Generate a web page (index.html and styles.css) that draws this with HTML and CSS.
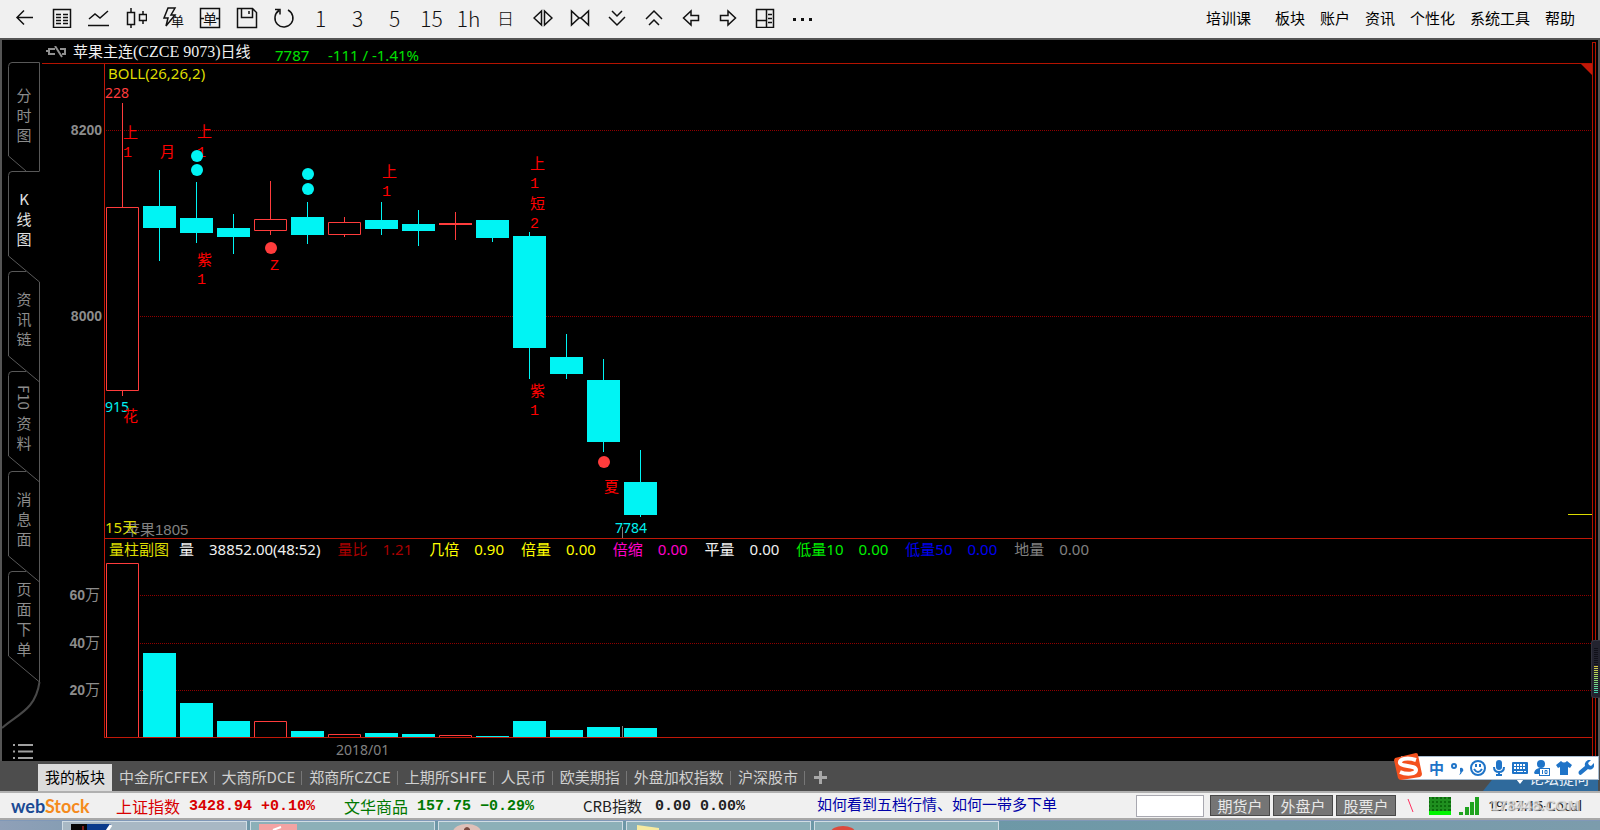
FILE: index.html
```html
<!DOCTYPE html>
<html lang="zh-CN">
<head>
<meta charset="utf-8">
<title>苹果主连 日线</title>
<link rel="stylesheet" href="styles.css">
</head>
<body>
<header class="toolbar">
  <div class="tools">
    <button class="tool" aria-label="返回"><svg width="20" height="20"><path d="M18 9.500H2M9 2.500L2 9.500l7 7"/></svg></button>
    <button class="tool" aria-label="报价"><svg width="20" height="20"><path d="M1.500 1.500h17v18h-17zM4 6.500h5M11 6.500h5M4 9.500h5M11 9.500h5M4 12.500h5M11 12.500h5M4 15.500h5M11 15.500h5"/></svg></button>
    <button class="tool" aria-label="分时"><svg width="22" height="20"><path d="M1 11l6-5 5 4 8-7M0 17.500h21"/></svg></button>
    <button class="tool" aria-label="K线"><svg width="22" height="20"><path d="M2.500 4.500h7v12h-7zM6 0v4M6 16v4M14.500 6.500h7v6h-7zM18 3v3M18 13v3"/></svg></button>
    <button class="tool" aria-label="闪电下单"><svg width="22" height="22"><path d="M6 1h7l-4 7h4L4 19l2-8H2z"/><text class="tool-word" x="9" y="19">单</text></svg></button>
    <button class="tool" aria-label="下单"><svg width="22" height="22"><path d="M1.500 1.500h19v19h-19zM1 11.500h4M17 11.500h4"/><text class="tool-word big" x="4" y="17">单</text></svg></button>
    <button class="tool" aria-label="保存"><svg width="22" height="22"><path d="M1.500 1.500h15l4 4v15h-19zM5.500 1.500v9h11v-9M13 4v3"/></svg></button>
    <button class="tool" aria-label="刷新"><svg width="22" height="22"><path d="M6 3.500A9 9 0 1 0 15 3M2 2.500h5v5"/></svg></button>
    <button class="tool period">1</button>
    <button class="tool period">3</button>
    <button class="tool period">5</button>
    <button class="tool period">15</button>
    <button class="tool period">1h</button>
    <button class="tool period day">日</button>
    <button class="tool" aria-label="拉宽"><svg width="20" height="18"><path d="M8.500 2v14L1 9zM11.500 2v14L19 9z"/></svg></button>
    <button class="tool" aria-label="收窄"><svg width="20" height="18"><path d="M1.500 2v14L9 9zM18.500 2v14L11 9zM8 9h4"/></svg></button>
    <button class="tool" aria-label="向下"><svg width="18" height="18"><path d="M4 2l5 5 5-5M1 8l8 8 8-8"/></svg></button>
    <button class="tool" aria-label="向上"><svg width="18" height="18"><path d="M1 10l8-8 8 8M4 16l5-5 5 5"/></svg></button>
    <button class="tool" aria-label="左移"><svg width="18" height="18"><path d="M9 2v4.500h7.500v5H9V16L1.500 9z"/></svg></button>
    <button class="tool" aria-label="右移"><svg width="18" height="18"><path d="M9 2v4.500H1.500v5H9V16l7.500-7z"/></svg></button>
    <button class="tool" aria-label="布局"><svg width="20" height="20"><path d="M1.500 1.500h17v18h-17zM11.500 1v18M1 12.500h10M13 6.500h4M13 10.500h4M13 14.500h4"/></svg></button>
    <button class="tool" aria-label="更多"><svg width="20" height="20"><path class="dots" d="M1 11.500h3M9 11.500h3M17 11.500h3"/></svg></button>
  </div>
  <nav class="menu">
    <a href="#" class="course">培训课</a><a href="#">板块</a><a href="#">账户</a><a href="#">资讯</a><a href="#">个性化</a><a href="#">系统工具</a><a href="#">帮助</a>
  </nav>
</header>

<main class="work">
  <aside class="side">
    <svg class="side-lines" width="40" height="721">
      <g fill="none" stroke="#585858" stroke-width="1">
        <path d="M37.500 131V22.500H10q-3.500 0-3.500 4V116L24 131"/>
        <path d="M37.500 131.500H10q-3.500 0-3.500 4V216L37.500 242V642"/>
        <path d="M24 231.500H10q-3.500 0-3.500 4V316L37.500 342"/>
        <path d="M24 331.500H10q-3.500 0-3.500 4V416L37.500 442"/>
        <path d="M24 431.500H10q-3.500 0-3.500 4V516L37.500 542"/>
        <path d="M24 531.500H10q-3.500 0-3.500 4V616L37.500 642"/>
        <path d="M37.500 642c-4 28-22 32-37.500 46" stroke-width="2" stroke="#484848"/>
      </g>
    </svg>
    <button class="tab first"><span>分</span><span>时</span><span>图</span></button>
    <button class="tab on"><span>K</span><span>线</span><span>图</span></button>
    <button class="tab"><span>资</span><span>讯</span><span>链</span></button>
    <button class="tab"><span class="turn">F10</span><span>资</span><span>料</span></button>
    <button class="tab"><span>消</span><span>息</span><span>面</span></button>
    <button class="tab"><span>页</span><span>面</span><span>下</span><span>单</span></button>
    <button class="list" aria-label="列表"><svg width="22" height="18"><path d="M1 3h2M6 3h15M1 9.500h2M6 9.500h15M1 16h2M6 16h15" stroke="#a0a0a0" stroke-width="2"/></svg></button>
  </aside>

  <section class="chart">
    <div class="title">
      <svg class="link" width="22" height="12" fill="none" stroke="#909090" stroke-width="2"><path d="M9 3H3v5h6M14 3h5v5h-3M0 5h3M9 0l7 11"/></svg>
      <span class="name">苹果主连<span class="code">(CZCE 9073)</span>日线</span>
      <span class="last">7787</span><span class="change">-111 / -1.41%</span>
    </div>
    <div class="price">
      <svg class="plot" width="100%" height="474">
        <path class="grid" d="M1 66.500H4000M1 252.500H4000"/>
        <text class="axis" x="-3" y="71">8200</text>
        <text class="axis" x="-3" y="257">8000</text>
        <g transform="translate(-105 -64)">
          <text class="ind" x="108" y="79">BOLL(26,26,2)</text>
          <text class="num hi" x="105" y="98">228</text>
          <g class="mark">
            <text x="123" y="138">上</text><text x="123" y="157">1</text>
            <text x="160" y="157">月</text>
            <text x="197" y="137">上</text><text x="197" y="157">1</text>
            <text x="197" y="265">紫</text><text x="197" y="284">1</text>
            <text x="270" y="270">Z</text>
            <text x="382" y="177">上</text><text x="382" y="196">1</text>
            <text x="530" y="169">上</text><text x="530" y="188">1</text>
            <text x="530" y="209">短</text><text x="530" y="228">2</text>
            <text x="530" y="396">紫</text><text x="530" y="415">1</text>
            <text x="604" y="492">夏</text>
          </g>
          <g class="up">
            <path d="M122.500 103V207M122.500 391V396M270.500 181V219M270.500 231V235M344.500 217V222M344.500 235V237M455.500 212V240"/>
            <path d="M106.500 207.500h32v183h-32zM254.500 219.500h32v11h-32zM328.500 222.500h32v12h-32z"/>
            <path d="M439 224h33" stroke-width="2"/>
          </g>
          <path class="wick" d="M159.500 170V261M196.500 182V243M233.500 214V254M307.500 202V244M381.500 202V235M418.500 210V246M492.500 238V242M529.500 232V379M566.500 334V379M603.500 359V452M640.500 450V517"/>
          <g class="down">
            <rect x="143" y="206" width="33" height="22"/><rect x="180" y="218" width="33" height="15"/>
            <rect x="217" y="228" width="33" height="9"/><rect x="291" y="217" width="33" height="18"/>
            <rect x="365" y="220" width="33" height="9"/><rect x="402" y="224" width="33" height="7"/>
            <rect x="476" y="220" width="33" height="18"/><rect x="513" y="236" width="33" height="112"/>
            <rect x="550" y="357" width="33" height="17"/><rect x="587" y="380" width="33" height="62"/>
            <rect x="624" y="482" width="33" height="33"/>
            <circle cx="197" cy="156" r="6"/><circle cx="197" cy="170" r="6"/>
            <circle cx="308" cy="174" r="6"/><circle cx="308" cy="189" r="6"/>
          </g>
          <g fill="#ff3c3c"><circle cx="271" cy="248" r="6"/><circle cx="604" cy="462" r="6"/></g>
          <text class="num lo" x="105" y="412">915</text>
          <g class="mark"><text x="123" y="421">花</text></g>
          <text class="contract" x="125" y="535">苹果1805</text>
          <text class="days" x="105" y="533">15天</text>
          <text class="num lo" x="615" y="533">7784</text>
          <path d="M622.500 527V538" stroke="#808080"/>
        </g>
      </svg>
      <i class="corner"></i><i class="latest"></i>
    </div>
    <div class="volume">
      <div class="legend">
        <p class="c-ind">量柱副图</p>
        <p class="c-vol"><span>量</span><span>38852.00(48:52)</span></p>
        <p class="c-dark"><span>量比</span><span>1.21</span></p>
        <p class="c-yellow"><span>几倍</span><span>0.90</span></p>
        <p class="c-yellow"><span>倍量</span><span>0.00</span></p>
        <p class="c-pink"><span>倍缩</span><span>0.00</span></p>
        <p class="c-white"><span>平量</span><span>0.00</span></p>
        <p class="c-green"><span>低量10</span><span>0.00</span></p>
        <p class="c-blue"><span>低量50</span><span>0.00</span></p>
        <p class="c-grey"><span>地量</span><span>0.00</span></p>
      </div>
      <svg class="plot" width="100%" height="176">
        <path class="grid" d="M1 34.500H4000M1 82.500H4000M1 129.500H4000"/>
        <text class="axis" x="-5" y="39">60<tspan class="wan">万</tspan></text>
        <text class="axis" x="-5" y="87">40<tspan class="wan">万</tspan></text>
        <text class="axis" x="-5" y="134">20<tspan class="wan">万</tspan></text>
        <g transform="translate(-105 -561)">
          <path class="up solid" d="M106.500 738V563.500h32V738M254.500 738V721.500h32V738M328.500 738V734.500h32V738M439.500 738V735.500h32V738"/>
          <g class="down">
            <rect x="143" y="653" width="33" height="84"/><rect x="180" y="703" width="33" height="34"/>
            <rect x="217" y="721" width="33" height="16"/><rect x="291" y="731" width="33" height="6"/>
            <rect x="365" y="733" width="33" height="4"/><rect x="402" y="734" width="33" height="3"/>
            <rect x="476" y="736" width="33" height="1"/><rect x="513" y="721" width="33" height="16"/>
            <rect x="550" y="730" width="33" height="7"/><rect x="587" y="727" width="33" height="10"/>
            <rect x="624" y="728" width="33" height="9"/>
          </g>
          <path d="M622.500 726V737" stroke="#808080"/>
        </g>
      </svg>
    </div>
    <div class="dates">2018/01</div>
  </section>
  <div class="rail"></div>
  <div class="meter"><i></i></div>
</main>

<nav class="boards">
  <a href="#" class="on">我的板块</a><a href="#">中金所CFFEX</a><a href="#">大商所DCE</a><a href="#">郑商所CZCE</a><a href="#">上期所SHFE</a><a href="#">人民币</a><a href="#">欧美期指</a><a href="#">外盘加权指数</a><a href="#">沪深股市</a>
  <button class="add" aria-label="添加板块"><svg width="13" height="13"><path d="M6.500 0v13M0 6.500h13" stroke="#a8a8a8" stroke-width="3"/></svg></button>
  <div class="forum"><svg width="18" height="12" fill="#fff"><path d="M2 0h14v3h-3l-4 5-4-5H2z"/></svg><span>论坛提问</span></div>
  <div class="ime">
    <svg class="ime-logo" width="30" height="30"><path d="M2 6L23 1q2 0 2 2l4 19q0 2-2 3L8 28q-2 0-3-2L1 8z" fill="#f4511e"/><path d="M23 8C14 5 6 7 7 11c1 4 16 2 16 7 0 4-9 5-16 2" fill="none" stroke="#fff" stroke-width="4"/></svg>
    <span class="zh">中</span>
    <svg width="14" height="16"><circle cx="4" cy="6" r="2" fill="none" stroke="#1f74c8" stroke-width="2"/><path d="M10 8a2 2 0 1 1 2 4q-1 3-3 3 2-2 1-4z" fill="#1f74c8"/></svg>
    <svg width="16" height="16" fill="none" stroke="#1f74c8" stroke-width="2"><circle cx="8" cy="8" r="7"/><path d="M4 9q4 6 8 0M6 4v3M10 4v3"/></svg>
    <svg width="14" height="16" fill="none" stroke="#1f74c8" stroke-width="2"><rect x="4" y="0" width="6" height="10" rx="3" fill="#1f74c8" stroke="none"/><path d="M2 7q0 5 5 5t5-5M7 12v3M4 15h6"/></svg>
    <svg width="16" height="12"><rect width="16" height="12" rx="1" fill="#1f74c8"/><path d="M2 3h12M2 6h12" stroke="#fff" stroke-width="2" stroke-dasharray="2 1"/><path d="M2 9.500h2M5 9.500h6M12 9.500h2" stroke="#fff" stroke-width="1"/></svg>
    <svg width="16" height="16"><circle cx="7" cy="4" r="4" fill="#1f74c8"/><path d="M0 13q1-5 7-5t6 3v3H1z" fill="#1f74c8"/><rect x="5.500" y="8.500" width="10" height="7" fill="#fff" stroke="#1f74c8"/><path d="M8.500 10v4M11 10.500h2v3h-2z" fill="none" stroke="#1f74c8"/></svg>
    <svg width="16" height="14"><path d="M5 0q3 3 6 0l5 4-2 3-2-1v8H4V6L2 7 0 4z" fill="#1f74c8"/></svg>
    <svg width="16" height="16"><path d="M10 0q2-1 3 0l-3 3 1 2 2 1 3-3q1 4-2 6-2 1-4 0l-6 5q-2 2-3 0-1-1 0-3l6-5q-1-4 3-6z" fill="#1f74c8"/></svg>
  </div>
</nav>

<footer class="status">
  <div class="brand"><span class="web">web</span><span class="stock">Stock</span></div>
  <div class="quote red"><span>上证指数</span><b>3428.94</b><b>+0.10%</b></div>
  <div class="quote green"><span>文华商品</span><b>157.75</b><b>−0.29%</b></div>
  <div class="quote black"><span>CRB指数</span><b>0.00</b><b>0.00%</b></div>
  <a href="#" class="help">如何看到五档行情、如何一带多下单</a>
  <div class="right">
    <input type="text" aria-label="代码">
    <button class="acct">期货户</button><button class="acct">外盘户</button><button class="acct">股票户</button>
    <svg class="slash" width="8" height="16"><path d="M1 1l5 13" stroke="#ff3060"/></svg>
    <svg class="load" width="22" height="18"><rect width="22" height="18" fill="#0c6a0c"/><path d="M2 0v14M6 0v14M10 0v14M14 0v14M18 0v14M0 3h22M0 7h22M0 11h22" stroke="#1f8f1f" stroke-width="2"/><rect y="14" width="22" height="4" fill="#00f400"/></svg>
    <svg class="signal" width="20" height="18" fill="#1fa31f"><path d="M0 15h4v3H0zM6 10h4v8H6zM11 5h4v13h-4zM16 0h4v18h-4z"/></svg>
    <div class="clock"><time>19:17:15-Local</time><span class="wm">178448.COM</span></div>
  </div>
</footer>

<div class="taskbar">
  <button class="task first" aria-label="行情窗口"><svg width="42" height="7"><rect width="16" height="7" fill="#060606"/><path d="M12 2v5" stroke="#e33"/><path d="M16 0h24l-4 7H16z" fill="#0b3b8c"/><path d="M40 1l-4 6" stroke="#fff" stroke-width="3"/></svg></button>
  <button class="task" aria-label="窗口二"><svg width="42" height="7"><rect width="38" height="7" fill="#f3a3a3"/><path d="M14 6l8-3" stroke="#fff" stroke-width="2"/></svg></button>
  <button class="task" aria-label="窗口三"><svg width="42" height="7"><ellipse cx="20" cy="8" rx="14" ry="8" fill="#dfc0b8"/><path d="M17 5q3-4 6 0v2h-6z" fill="#7a4a40"/></svg></button>
  <button class="task" aria-label="窗口四"><svg width="42" height="7"><path d="M2 1l22 3v3H2z" fill="#f6eaa0"/></svg></button>
  <button class="task" aria-label="窗口五"><svg width="42" height="7"><ellipse cx="20" cy="8" rx="12" ry="6" fill="#dc4a3c"/></svg></button>
</div>
</body>
</html>
```

FILE: styles.css
```css
* { box-sizing: border-box; }
body {
  margin: 0;
  min-height: 100vh;
  display: flex;
  flex-direction: column;
  overflow: hidden;
  background: #000;
  font: 15px/20px "Noto Sans", "Noto Sans CJK SC", sans-serif;
}
button { border: 0; padding: 0; margin: 0; background: none; font: inherit; color: inherit; }
a { color: inherit; text-decoration: none; }
p { margin: 0; }
svg { display: block; flex: none; }

/* top toolbar */
.toolbar {
  height: 40px;
  padding: 0 25px 2px 6px;
  display: flex;
  justify-content: space-between;
  background: #f0f0f0;
  border-bottom: 2px solid #555;
  color: #000;
}
.tools { display: flex; }
.tool { width: 37px; display: flex; align-items: center; justify-content: center; }
.tool svg { fill: none; stroke: #111; stroke-width: 1; }
.tool path { stroke-width: 1.5; }
.tool .dots { stroke-width: 3; }
.tool .tool-word { fill: #111; stroke: none; font: 13px "Noto Sans CJK SC", sans-serif; }
.tool .big { font-size: 14px; }
.period { font: 21px/30px "Noto Sans CJK SC", sans-serif; font-weight: 300; color: #111; }
.day { font-size: 17px; }
.menu { display: flex; align-items: center; gap: 15px; font-family: "Noto Sans CJK SC", sans-serif; }
.course { margin-right: 9px; }

/* work area */
.work {
  position: relative;
  flex: 1;
  display: flex;
  border: solid #555;
  border-width: 0 2px;
}
.side {
  position: relative;
  width: 40px;
  display: flex;
  flex-direction: column;
  padding: 22px 0 1px 6px;
  color: #8c8c8c;
  font-family: "Noto Sans CJK SC", sans-serif;
}
.side-lines { position: absolute; left: 0; top: 0; }
.tab {
  position: relative;
  width: 32px;
  height: 100px;
  padding-bottom: 4px;
  display: flex;
  flex-direction: column;
  align-items: center;
  justify-content: center;
}
.tab.first { height: 109px; }
.tab.on { color: #e0e0e0; }
.turn { writing-mode: vertical-rl; margin-bottom: 4px; }
.list { margin: auto 0 0 4px; width: 22px; }

.chart { flex: 1; min-width: 0; display: flex; flex-direction: column; }
.title {
  height: 24px;
  border-bottom: 1px solid #b41200;
  display: flex;
  align-items: center;
  padding-left: 4px;
  color: #00e000;
}
.link { margin-right: 5px; }
.name { color: #f0f0f0; font-family: "Noto Sans CJK SC", sans-serif; width: 202px; }
.code { font-family: "Liberation Serif", serif; font-size: 16px; }
.last { width: 53px; padding-top: 6px; }
.change { padding-top: 6px; }

.price, .volume { position: relative; margin-left: 62px; border-left: 1px solid #c01808; }
.volume { border-top: 1px solid #c01808; border-bottom: 1px solid #c01808; }
.plot { overflow: visible; clip-path: inset(0 0 0 -62px); }
.grid { stroke: #900000; stroke-dasharray: 1 1; }
.axis { fill: #8c8c8c; font: bold 14px "Liberation Sans", sans-serif; text-anchor: end; }
.wan { font: 15px "Noto Sans CJK SC", sans-serif; }
.ind { fill: #dcdc00; font-size: 15px; }
.num { font-size: 14px; }
.hi { fill: #ff3c3c; }
.lo { fill: #00f0f0; }
.mark { fill: #f00; font: 15px "Liberation Mono", "Noto Sans CJK SC", monospace; }
.contract { fill: #808080; font-size: 15px; font-family: "Liberation Sans", "Noto Sans CJK SC", sans-serif; }
.days { fill: #dcdc00; font-size: 15px; }
.up { stroke: #ff3c3c; fill: #000; }
.wick { stroke: #00f4f4; }
.down { fill: #00f4f4; }
.corner {
  position: absolute;
  right: 0;
  top: 0;
  border-top: 11px solid #c01808;
  border-left: 11px solid transparent;
}
.latest { position: absolute; right: 0; bottom: 23px; width: 24px; height: 1px; background: #dcdc00; }

.legend { height: 22px; padding: 0 0 2px 4px; display: flex; align-items: center; gap: 17px; white-space: nowrap; }
.legend p { display: flex; gap: 15px; }
.legend .c-ind { margin-right: -7px; }
.c-ind { color: #dcdc00; }
.c-vol, .c-white { color: #f0f0f0; }
.c-dark { color: #a80000; }
.c-yellow { color: #ffff00; }
.c-pink { color: #ff00c8; }
.c-green { color: #00f000; }
.c-blue { color: #0000f0; }
.c-grey { color: #808080; }
.dates { height: 23px; padding-left: 294px; color: #808080; font-size: 14px; line-height: 23px; }

.rail { width: 4px; margin: 2px 2px 0 0; border: solid #b41200; border-width: 1px 1px 0; }
.meter {
  position: absolute;
  right: -2px;
  top: 600px;
  width: 9px;
  height: 58px;
  padding: 6px 2px;
  background: #23232f;
  border: 1px solid #34343f;
  border-right: 0;
  border-radius: 3px 0 0 3px;
}
.meter i {
  display: block;
  height: 46px;
  width: 4px;
  background:
    repeating-linear-gradient(#23232f 0 1px, transparent 1px 2px),
    linear-gradient(#101018 0 38%, #e0c840 40%, #a0d860 65%, #40d0b0 100%);
}

/* board tabs */
.boards {
  position: relative;
  height: 30px;
  padding: 3px 0 0 38px;
  display: flex;
  background: #4d4d4d;
  color: #d0d0d0;
  font-family: "Noto Sans CJK SC", sans-serif;
}
.boards a { padding: 0 7px; line-height: 26px; position: relative; white-space: nowrap; }
.boards a:not(.on)::after { content: ""; position: absolute; right: 0; top: 7px; width: 1px; height: 14px; background: #777; }
.boards .on { background: #dcdcdc; color: #000; }
.add { padding: 0 9px; }
.forum {
  position: absolute;
  right: 2px;
  bottom: 0;
  width: 115px;
  height: 20px;
  padding-left: 28px;
  display: flex;
  align-items: flex-start;
  overflow: hidden;
  background: #2f6a9c;
  clip-path: polygon(16px 0, 100% 0, 100% 100%, 0 100%);
  color: #e8f0f8;
  line-height: 14px;
}
.forum svg { margin-top: 5px; }
.ime {
  position: absolute;
  right: 1px;
  top: -5px;
  height: 24px;
  padding: 0 4px 0 0;
  display: flex;
  align-items: center;
  gap: 6px;
  background: #fff;
  border: 1px solid #a8bcd0;
  color: #1f74c8;
}
.ime-logo { margin: -6px 0 -3px -9px; }
.zh { font-weight: bold; font-size: 15px; }

/* status strip */
.status {
  height: 29px;
  display: flex;
  align-items: center;
  padding: 0 16px 0 11px;
  background: #f0f0f0;
  border-top: 2px solid #b0b0b0;
  border-bottom: 2px solid #a8a8a8;
  white-space: nowrap;
}
.brand { width: 105px; font: bold 18px/20px Lato, sans-serif; }
.web { color: #1a4a94; }
.stock { color: #f58a1c; }
.quote { display: flex; gap: 9px; align-items: center; font-size: 16px; font-family: "Noto Sans CJK SC", sans-serif; }
.quote b { font: bold 15px/20px "Liberation Mono", monospace; padding-top: 3px; }
.red { color: #d80000; width: 228px; }
.green { color: #007800; width: 239px; }
.black { color: #222; width: 234px; }
.black span { font-size: 15px; margin-right: 4px; }
.help { color: #0000a8; font-family: "Noto Sans CJK SC", sans-serif; padding-bottom: 4px; }
.right { margin-left: auto; display: flex; align-items: center; }
.right input { width: 68px; height: 22px; margin-right: 6px; border: 1px solid #a8a8b0; background: #fff; }
.acct { width: 60px; height: 21px; margin-right: 3px; background: #757575; border: 1px solid #484848; color: #e8e8e8; line-height: 18px; font-family: "Noto Sans CJK SC", sans-serif; }
.slash { margin: 0 14px 0 8px; }
.load { margin-right: 8px; }
.signal { margin-right: 9px; }
.clock { position: relative; color: #222; font-size: 14px; width: 96px; }
.wm {
  position: absolute;
  left: 2px;
  top: -1px;
  font: bold 15px/20px "Liberation Sans", sans-serif;
  color: rgba(240, 240, 240, .7);
  text-shadow: 1px 1px 1px #999;
}

/* desktop taskbar */
.taskbar {
  height: 10px;
  padding-left: 62px;
  display: flex;
  gap: 3px;
  overflow: hidden;
  background: linear-gradient(90deg, #8fa0b8, #6f97a8 15%, #6c98a6 60%, #7c9cac);
  border-top: 1px solid #8098b8;
}
.task { width: 185px; height: 20px; padding: 2px 0 0 8px; border: 1px solid #d0dce4; background: #8cb0b8; display: flex; align-items: flex-start; }
.task.first { background: #a8b8c4; }
```
